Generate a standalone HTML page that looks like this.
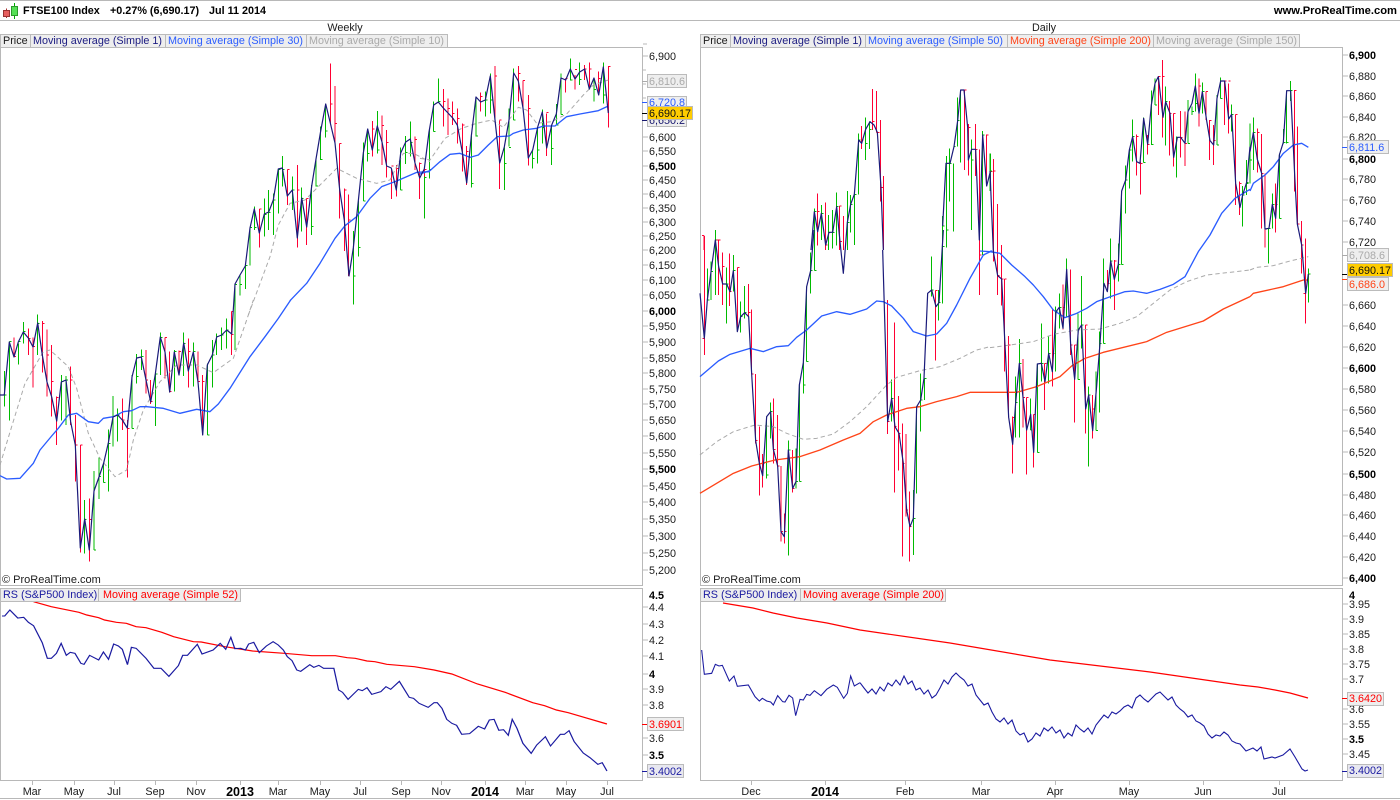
<!DOCTYPE html>
<html><head><meta charset="utf-8"><title>FTSE100 Index</title>
<style>
html,body{margin:0;padding:0;background:#fff;width:1400px;height:800px;overflow:hidden}
svg{display:block;position:absolute;left:0;top:0}
text{font-family:"Liberation Sans",sans-serif;font-size:10.8px;fill:#1a1a1a}
.b{font-weight:bold;fill:#000}
.g{fill:none;stroke:#00bb00;stroke-width:3}
.r{fill:none;stroke:#ff0033;stroke-width:3}
.k{fill:none;stroke:#1a1a7a;stroke-linejoin:round}
.m{fill:none;stroke:#2a5cff;stroke-linejoin:round}
.d{fill:none;stroke:#aaa;stroke-dasharray:4 3}
.o{fill:none;stroke:#ff4418;stroke-linejoin:round}
.f{fill:#eee;stroke:#bbb;stroke-width:1}
.bd{fill:none;stroke:#b8b8b8;stroke-width:1}
</style></head><body>
<svg width="1400" height="800" viewBox="0 0 1400 800" xmlns="http://www.w3.org/2000/svg">
<rect width="1400" height="800" fill="#fff"/>
<!-- frame -->
<path class="bd" d="M0 .5H1400M0 20.5H1400M0 47.5H642.5M700 47.5H1342.5M0 798.5H1400"/>
<path class="bd" d="M.5 47V585.5H642.5V47M700.5 47V585.5H1342.5V47M.5 588.5H642.5V780.5H.5ZM700.5 588.5H1342.5V780.5H700.5Z"/>

<!-- WEEKLY bars -->
<g transform="translate(0,300) scale(.33333)" shape-rendering="crispEdges">
<path class="g" d="M13 213V320M13 285h6M28 125V362M28 125h6M55 130V193M55 125h6M70 66V130M70 95h6M113 43V165M113 70h6M184 225V362M184 245h6M198 228V375M198 240h6M254 600V760M254 658h6M282 513V750M282 750h6M297 472V597M297 530h6M311 490V548M311 548h6M325 388V575M325 430h6M339 288V440M339 350h6M353 325V425M353 345h6M396 225V385M396 385h6M410 162V250M410 230h6M424 148V210M424 170h6M466 215V378M466 222h6M481 97V225M481 112h6M523 150V275M523 155h6M551 98V228M551 130h6M580 128V260M580 155h6M622 190V405M622 405h6M637 120V263M637 165h6M650 100V165M650 110h6M665 83V150M665 105h6M680 55V145M680 90h6"/>
<path class="r" d="M42 112V170M42 170h6M85 85V165M85 115h6M99 112V263M99 140h6M127 63V218M127 70h6M141 88V290M141 165h6M155 135V350M155 245h6M170 290V435M170 292h6M212 200V375M212 240h6M226 345V545M226 435h6M241 435V758M241 435h6M268 595V785M268 658h6M367 295V390M367 360h6M382 360V533M382 385h6M438 150V280M438 240h6M452 240V312M452 305h6M495 112V235M495 112h6M509 155V278M509 275h6M537 152V225M537 155h6M565 115V262M565 155h6M594 155V248M594 245h6M608 225V405M608 245h6M695 38V130M695 103h6"/>
</g>
<g transform="translate(190,55) scale(.33333)" shape-rendering="crispEdges">
<path class="g" d="M135 688V885M135 688h6M150 660V722M150 688h6M166 632V702M166 632h6M180 518V632M180 518h6M193 455V525M193 518h6M223 430V545M223 478h6M236 405V525M236 472h6M250 415V540M250 435h6M265 340V475M265 343h6M277 303V395M277 343h6M307 365V465M307 405h6M335 397V530M335 430h6M365 390V540M365 515h6M378 313V395M378 393h6M392 215V315M392 313h6M407 147V248M407 228h6M490 528V748M490 663h6M505 438V605M505 578h6M520 262V438M520 438h6M533 222V320M533 295h6M562 168V295M562 285h6M632 277V405M632 405h6M647 243V327M647 293h6M661 200V305M661 262h6M704 343V490M704 368h6M718 220V370M718 343h6"/>
<path class="r" d="M125 770V900M125 770h6M208 462V578M208 462h6M292 343V450M292 343h6M322 330V578M322 405h6M349 430V570M349 430h6M421 25V205M421 147h6M435 93V265M435 205h6M448 265V490M448 265h6M463 400V588M463 405h6M476 418V663M476 495h6M547 198V305M547 222h6M576 182V330M576 212h6M590 225V367M590 262h6M604 340V432M604 333h6M619 330V425M619 340h6M675 245V345M675 253h6M689 322V432M689 325h6"/>
</g>
<g transform="translate(420,50) scale(.33333)" shape-rendering="crispEdges">
<path class="g" d="M41 155V245M41 245h6M55 85V155M55 155h6M154 258V413M154 400h6M168 140V260M168 258h6M196 125V200M196 150h6M211 70V190M211 150h6M253 292V420M253 340h6M267 175V290M267 292h6M281 55V210M281 210h6M338 298V355M338 325h6M353 235V340M353 300h6M367 178V280M367 232h6M395 225V345M395 295h6M409 162V225M409 225h6M423 70V193M423 193h6M451 25V92M451 90h6M479 37V105M479 88h6M522 85V155M522 118h6M550 38V160M550 135h6"/>
<path class="r" d="M13 358V380M13 358h6M70 117V230M70 155h6M84 145V255M84 175h6M97 155V225M97 190h6M112 175V280M112 205h6M127 220V365M127 225h6M140 288V405M140 305h6M182 127V185M182 140h6M225 48V215M225 78h6M239 212V417M239 210h6M295 48V155M295 70h6M309 92V175M309 92h6M325 135V347M325 175h6M380 190V318M380 187h6M437 85V128M437 85h6M465 75V118M465 58h6M494 45V90M494 57h6M508 38V118M508 57h6M536 65V135M536 85h6M565 48V232M565 50h6"/>
</g>
<!-- weekly MA10 -->
<g transform="translate(0,300) scale(.33333)"><path class="d" style="stroke-width:3;stroke-dasharray:13 9" d="M0 495L35 380L75 250L130 155L150 150L205 200L230 265L265 400L300 475L345 530L380 510L400 420L430 330L480 245L530 195L590 195L640 218L700 175L740 60L760 0"/></g>
<g transform="translate(190,55) scale(.33333)"><path class="d" style="stroke-width:3;stroke-dasharray:13 9" d="M175 780L240 605L265 510L300 445L345 435L405 375L440 340L500 370L560 385L600 375L640 295L670 295L720 320"/></g>
<g transform="translate(420,50) scale(.33333)"><path class="d" style="stroke-width:3;stroke-dasharray:13 9" d="M0 325L30 330L75 265L125 235L170 220L215 210L250 232L295 172L320 180L350 220L395 215L440 192L490 135L520 105L565 90"/></g>
<!-- weekly MA30 -->
<g transform="translate(0,300) scale(.33333)"><path class="m" stroke-width="4" d="M0 527L20 537L60 535L100 490L120 450L155 408L175 385L205 345L230 340L265 365L295 370L310 355L340 350L370 335L395 332L420 320L440 320L490 325L540 340L590 328L630 335L655 312L690 265L750 170L795 110L835 55L872 0"/></g>
<g transform="translate(190,55) scale(.33333)"><path class="m" stroke-width="4" d="M300 737L350 685L390 625L435 550L465 512L500 485L540 430L575 395L620 378L680 352L720 350"/></g>
<g transform="translate(420,50) scale(.33333)"><path class="m" stroke-width="4" d="M0 372L30 362L60 335L90 313L120 310L150 322L175 315L205 285L232 260L268 258L280 250L310 240L350 235L370 228L405 228L440 200L480 192L535 182L565 168"/></g>
<!-- weekly close -->
<polyline class="k" stroke-width="1.2" points="0,395 4.3,395 9.3,342 14,357 18.3,342 23.3,332 28.3,338 33,347 37.7,323 42.3,355 47,382 51.7,397 56.7,421 61.3,382 66,380 70.7,422 75.3,445 80.3,548 84.7,519 89.3,550 94,491 99,477 103.7,463 108.3,443 113,417 117.7,415 122.3,420 127.3,428 132,377 136.7,358 141.3,357 146,380 150.7,402 155.3,374 160.3,337 165,352 169.7,392 174.3,352 179,375 183.7,343 188.3,371 193.3,352 198,382 202.7,435 207.3,365 212.3,355 216.7,337 221.7,335 226.7,330 231.7,334 235,284 240,275 245.3,266 250,228 254.3,209 259.3,233 264.3,214 268.7,212 273.3,200 278.3,169 282.3,168 287.3,196 292.3,190 297.3,238 301.7,198 306.7,227 311.7,186 316,159 320.7,131 325.7,104 330.3,123 335,143 339.7,190 344.3,220 349,276 353.3,248 358.3,201 363.3,153 367.7,129 372.3,150 377.3,126 382,142 386.7,166 391.3,168 396.3,190 400.7,153 405.7,142 410.3,139 415,163 419.7,178 424.3,169 429,132 433.7,105 438.3,102 443.3,108 448,113 452.7,118 457.3,125 462.3,152 466.7,183 471.3,136 476,97 480.7,102 485.3,100 490.3,76 495,120 499.7,163 504.3,147 509,120 513.7,73 518.3,81 523,108 528.3,158 532.7,150 537.7,127 542.3,112 546.7,148 551.7,125 556.3,114 561,78 565.7,80 570.3,69 575,79 579.7,72 584.7,69 589.3,89 594,78 598.7,95 603.3,67 608.3,113"/>

<!-- DAILY bars -->
<g transform="translate(700,230) scale(.33333)" shape-rendering="crispEdges">
<path class="g" d="M22 115V210M22 210h6M33 95V210M33 125h6M46 0V195M46 30h6M80 112V280M80 162h6M100 75V185M100 122h6M122 215V308M122 260h6M134 168V265M134 248h6M200 560V745M200 735h6M212 517V625M212 545h6M265 632V977M265 660h6M288 655V775M288 755h6M298 465V755M298 755h6M310 398V490M310 465h6M320 170V395M320 395h6M332 68V190M332 122h6M343 0V122M343 122h6M575 448V575M575 505h6M640 780V975M640 865h6M650 530V790M650 530h6M662 430V605M662 510h6M674 445V510M674 445h6M695 80V200M695 180h6M716 180V272M716 218h6M727 0V220M727 50h6M740 0V53M740 0h6M848 0V75M848 75h6"/>
<path class="r" d="M13 18V375M13 325h-6M56 30V195M56 30h6M68 68V225M68 110h6M88 70V228M88 185h6M112 112V305M112 112h6M146 162V260M146 248h6M155 238V432M155 432h6M167 432V640M167 632h6M178 590V797M178 700h6M188 672V773M188 700h6M220 505V700M220 658h6M233 555V710M233 708h6M243 708V935M243 905h6M253 850V940M253 905h6M278 660V788M278 775h6M562 210V612M562 575h6M584 277V788M584 590h6M596 498V722M596 610h6M607 580V980M607 700h6M618 612V860M618 840h6M628 785V995M628 890h6M707 182V392M707 182h6M838 0V195M838 75h6M880 0V95M880 90h6M893 0V195M893 140h6"/>
</g>
<g transform="translate(700,80) scale(.33333)" shape-rendering="crispEdges">
<path class="g" d="M46 453V510M343 385V510M343 395h6M364 375V480M364 400h6M386 405V510M386 457h6M398 390V505M398 457h6M409 337V497M409 380h6M442 333V510M442 427h6M452 345V458M452 373h6M463 342V495M463 343h6M476 160V343M476 180h6M497 112V240M497 190h6M508 125V207M508 148h6M727 408V510M727 438h6M739 228V503M739 250h6M749 205V365M749 250h6M760 250V455M760 200h6M772 52V200M772 122h6M782 30V248M782 30h6M814 178V450M814 240h6M848 153V510M848 165h6M871 220V332M871 275h6"/>
<path class="r" d="M12 467V510M12 467h-6M55 480V510M55 480h-6M353 340V497M353 395h6M376 367V510M376 495h6M418 378V510M418 378h6M430 408V510M420 485h6M485 138V207M485 180h6M518 27V150M518 125h6M530 33V157M530 157h6M542 120V365M532 157h6M550 288V510M543 322h6M793 30V270M793 30h6M805 132V287M805 142h6M827 132V288M827 208h6M838 208V510M827 208h6M859 163V318M859 165h6M881 237V510M871 275h6M893 372V510"/>
</g>
<g transform="translate(990,55) scale(.33333)" shape-rendering="crispEdges">
<path class="g" d="M0 295V408M0 348h6M77 965V1148M77 1043h6M88 852V1148M88 925h6M122 1030V1125M122 1125h6M142 925V1192M142 1192h6M154 805V980M154 925h6M176 843V985M176 895h6M196 755V950M196 770h6M208 715V820M208 757h6M230 610V785M230 785h6M264 775V973M264 973h6M275 663V880M275 810h6M296 995V1235M296 1020h6M318 950V1127M318 1127h6M329 830V1073M329 865h6M340 610V865M340 865h6M362 550V730M362 618h6M385 565V680M385 628h6M395 408V628M395 628h6M407 332V475M407 375h6M418 280V400M418 285h6M427 193V320M427 245h6M461 188V322M461 322h6M484 107V270M484 268h6M495 70V150M495 150h6M527 95V272M527 140h6M560 245V368M560 247h6M594 135V265M594 265h6M606 155V180M606 170h6M616 55V170M616 145h6M637 82V175M637 110h6M681 120V270M681 270h6M692 68V130M692 130h6M725 148V230M725 178h6M758 395V515M758 420h6M770 315V420M770 382h6"/>
<path class="r" d="M10 312V610M10 348h6M22 447V718M22 662h6M34 570V752M34 672h6M44 672V950M44 672h6M55 843V1087M55 870h6M67 1085V1255M67 1087h6M99 912V1118M99 1027h6M110 1027V1258M110 1027h6M131 1078V1237M131 1078h6M163 925V1065M163 925h6M187 760V995M187 895h6M219 688V823M219 757h6M242 643V900M242 870h6M254 870V1103M254 870h6M286 810V1135M286 810h6M307 1020V1150M307 1062h6M352 645V708M352 685h6M373 615V765M373 618h6M440 238V362M440 245h6M451 320V418M451 325h6M472 240V298M472 268h6M505 65V180M505 65h6M517 15V248M517 65h6M538 138V302M538 175h6M551 175V335M551 175h6M572 168V308M572 247h6M585 170V333M585 265h6M627 70V215M627 93h6M648 110V195M648 110h6M659 195V315M659 197h6M671 210V330M671 257h6M704 78V210M704 78h6M716 85V235M716 78h6M737 178V450M737 178h6M748 380V480M748 385h6"/>
</g>
<g transform="translate(1240,60) scale(.33333)" shape-rendering="crispEdges">
<path class="g" d="M7 378V500M7 405h6M20 300V370M20 370h6M30 190V370M30 300h6M40 172V330M40 218h6M86 505V610M86 505h6M97 400V505M97 433h6M118 280V475M118 475h6M130 207V250M130 247h6M140 92V250M140 247h6M152 63V123M152 92h6M205 625V728M205 642h6"/>
<path class="r" d="M52 205V338M52 218h6M64 222V505M64 340h6M75 340V563M75 507h6M107 370V517M107 433h6M163 90V395M163 92h6M172 200V495M172 492h6M185 483V640M185 555h6M197 535V790M197 700h-6"/>
</g>
<!-- daily MA150 -->
<g transform="translate(700,230) scale(.33333)"><path class="d" style="stroke-width:3;stroke-dasharray:13 9" d="M0 675L50 635L100 605L165 585L220 590L260 610L310 628L350 625L400 612L450 575L500 530L560 465L590 442L660 422L720 410L780 385L830 360L870 350"/></g>
<g transform="translate(990,55) scale(.33333)"><path class="d" style="stroke-width:3;stroke-dasharray:13 9" d="M0 878L60 870L130 860L190 838L260 825L330 822L390 805L440 785L490 745L540 705L590 680L650 660L780 645"/></g>
<g transform="translate(1240,60) scale(.33333)"><path class="d" style="stroke-width:3;stroke-dasharray:13 9" d="M30 630L50 622L100 617L150 603L205 590"/></g>
<!-- daily MA50 -->
<g transform="translate(700,230) scale(.33333)"><path class="m" stroke-width="4" d="M0 440L55 393L90 373L150 355L190 365L230 350L265 347L290 322L320 300L365 258L410 245L450 253L500 237L530 213L550 215L575 228L610 265L640 305L680 318L710 312L740 280L770 225L810 145L850 75L875 63L870 64"/></g>
<g transform="translate(990,55) scale(.33333)"><path class="m" stroke-width="4" d="M-30 588L0 590L30 595L65 630L105 665L130 690L160 725L190 765L225 788L260 775L290 760L320 740L370 722L405 710L430 708L470 715L510 703L550 688L585 665L625 590L660 540L695 475L735 430L780 403"/></g>
<g transform="translate(1240,60) scale(.33333)"><path class="m" stroke-width="4" d="M30 393L40 370L75 345L100 320L130 280L160 255L185 250L205 262"/></g>
<!-- daily MA200 -->
<g transform="translate(700,230) scale(.33333)"><path class="o" stroke-width="4" d="M0 790L50 760L100 730L155 708L225 690L300 680L360 660L430 630L480 610L520 575L560 555L620 535L660 530L710 515L770 500L810 487L870 487"/></g>
<g transform="translate(990,55) scale(.33333)"><path class="o" stroke-width="4" d="M0 1012L80 1012L140 995L210 965L245 933L285 910L340 892L470 860L530 832L640 798L700 762L780 725"/></g>
<g transform="translate(1240,60) scale(.33333)"><path class="o" stroke-width="4" d="M30 710L40 700L130 680L190 660L205 660"/></g>
<!-- daily close -->
<g transform="translate(700,230) scale(.33333)"><path class="k" stroke-width="3.6" d="M0 190L13 325L22 210L33 125L46 30L56 110L68 162L80 162L90 185L100 122L112 305L122 260L134 248L146 260L155 432L167 632L178 700L188 737L200 560L212 545L220 658L233 708L243 905L253 920L265 660L278 775L288 755L298 465L310 398L320 170L332 122L342 0M548 60L563 575L575 505L585 590L597 610L610 700L620 840L630 890L640 865L650 530L662 510L672 445L683 190L695 180L708 230L717 218L727 50L730 0"/></g>
<g transform="translate(700,80) scale(.33333)"><path class="k" stroke-width="3.6" d="M333 510L343 395L353 455L364 400L377 495L387 457L398 457L410 380L420 485L430 580L442 427L452 373L463 343L476 180L485 190L497 148L510 125L522 135L532 157L543 322L550 510M728 438L738 250L750 250L762 200L773 122L782 30L792 30L803 142L805 240L815 208L827 208L838 480L848 165L860 318L871 275"/></g>
<g transform="translate(990,55) scale(.33333)"><path class="k" stroke-width="3.6" d="M0 348L10 590L23 662L35 672L45 870L56 1087L68 1168L77 1043L88 925L99 1027L110 1125L122 1078L131 1192L142 927L154 925L165 980L176 895L187 950L198 770L208 757L219 820L230 643L242 870L254 973L265 825L275 810L287 1062L296 1020L308 1127L320 993L330 865L342 685L352 710L362 618L373 673L385 628L395 408L407 375L418 285L428 245L440 320L450 325L461 190L473 268L484 150L495 85L505 65L519 187L527 140L540 175L551 307L562 247L572 247L585 265L594 170L606 145L616 93L627 175L637 110L650 197L660 257L671 270L681 130L692 78L704 78L716 192L725 178L737 385L750 457L758 420L770 382L780 275"/></g>
<g transform="translate(1240,60) scale(.33333)"><path class="k" stroke-width="3.6" d="M30 275L40 218L52 298L65 340L75 507L87 505L97 433L107 475L118 285L130 247L140 92L152 92L165 365L172 492L185 555L197 700L205 642"/></g>

<!-- RS weekly -->
<g transform="translate(0,590) scale(.39463,.33333)">
<polyline fill="none" stroke="#ff0000" stroke-width="3.6" points="85,35 130,50 200,67 220,75 250,83 265,90 295,97 320,100 345,110 370,113 410,127 440,140 490,155 510,156 570,170 640,183 720,190 790,197 850,197 880,203 900,205 930,213 950,215 980,223 1050,230 1100,240 1145,252 1210,282 1280,307 1350,338 1380,347 1410,360 1440,368 1480,382 1538,402"/>
<polyline fill="none" stroke="#1a1aa0" stroke-width="3.2" points="5,78 12,78 25,60 45,84 60,82 72,97 85,107 107,158 120,205 130,205 143,190 155,160 168,196 178,187 190,190 205,220 213,223 227,196 250,210 262,186 275,208 288,162 300,168 310,178 323,224 333,172 345,175 370,205 390,235 408,235 428,259 452,227 463,196 475,196 500,163 512,192 540,180 558,160 572,178 585,142 595,176 610,175 622,180 630,162 643,157 657,188 675,168 692,155 705,165 718,180 728,200 740,212 752,240 762,244 785,224 795,232 808,226 820,235 846,235 858,300 868,307 882,328 908,298 918,302 930,293 942,313 965,305 978,290 990,298 1012,274 1037,322 1048,325 1062,340 1085,352 1100,338 1108,338 1120,355 1132,388 1145,400 1157,406 1170,433 1190,431 1212,409 1228,417 1240,390 1252,388 1264,421 1276,419 1288,436 1298,388 1310,415 1325,460 1346,490 1360,465 1382,440 1395,468 1420,433 1430,433 1442,422 1455,455 1478,489 1495,503 1515,523 1526,518 1538,543"/>
</g>
<!-- RS daily -->
<polyline fill="none" stroke="#ff0000" stroke-width="1.2" points="723,603 753,608 773,613 797,618 827,623 860,630 950,643 1050,660 1150,672 1240,685 1258,687 1275,690 1290,693 1308,698"/>
<g transform="translate(560,570) scale(.33333)"><polyline fill="none" stroke="#1a1aa0" stroke-width="3.2" points="425,240 433,313 455,310 466,283 477,288 487,286 508,333 522,318 532,349 565,345 585,380 598,393 607,385 620,393 632,396 640,405 653,377 668,395 675,396 687,376 698,384 707,437 720,388 730,390 740,373 750,376 763,362 783,377 800,358 820,345 832,352 851,385 862,370 872,318 883,348 900,338"/></g>
<polyline fill="none" stroke="#1a1aa0" stroke-width="1.1" points="860,682.7 864,688 868,693 872,689 876,694 880,687 884,691 888,683 892,686 896,680 900,685 904,676 908,684 912,681 916,690 920,688 924,694 928,690 932,698 936,695 940,688 944,680 948,684 952,677 956,673 960,677 964,680 968,686 972,684 976,695 980,700 984,705 988,703 992,712 996,719 1000,722 1004,718 1008,724 1012,720 1016,731 1020,735 1024,733 1028,742 1032,739 1036,733 1040,736 1044,728 1048,731 1052,727 1056,733 1060,730 1064,738 1068,733 1072,736 1076,725 1080,729 1084,732 1088,728 1092,734 1096,725 1100,720 1104,715 1108,718 1112,712 1116,714 1120,711 1124,707 1128,705 1132,708 1136,698 1140,695 1144,699 1148,702 1152,698 1156,694 1160,692 1164,696 1168,700 1172,697 1176,705 1180,709 1184,712 1188,717 1192,715 1196,721 1200,723 1204,726 1208,734 1212,738 1216,735 1220,736 1224,732 1228,735 1232,741 1236,743 1240,744 1246,751 1253,748 1257,751 1261,747 1264,759 1272,757 1275,758 1283,755 1290,749 1295,757 1302,769 1305,771 1308,770"/>

<!-- axis ticks -->
<path stroke="#b8b8b8" fill="none" d="M643 44h4M643 56h5M643 70h3M643 84h3M643 98h3M643 137h5M643 151h5M643 166h5M643 180h5M643 194h5M643 208h5M643 222h5M643 236h5M643 250h5M643 265h5M643 280h5M643 295h5M643 311h5M643 326h5M643 342h5M643 358h5M643 373h5M643 389h5M643 404h5M643 420h5M643 436h5M643 453h5M643 469h5M643 486h5M643 502h5M643 519h5M643 536h5M643 553h5M643 570h5M1343 55h5M1343 76h5M1343 96h5M1343 117h5M1343 137h5M1343 159h5M1343 179h5M1343 200h5M1343 221h5M1343 242h5M1343 305h5M1343 326h5M1343 347h5M1343 368h5M1343 389h5M1343 410h5M1343 431h5M1343 452h5M1343 474h5M1343 495h5M1343 515h5M1343 536h5M1343 557h5M1343 578h5M643 607h5M643 624h5M643 640h5M643 656h5M643 674h5M643 689h5M643 705h5M643 738h5M643 755h5M1343 604h5M1343 619h5M1343 634h5M1343 649h5M1343 664h5M1343 679h5M1343 709h5M1343 724h5M1343 739h5M1343 754h5M32.5 781v4M74.5 781v4M114.5 781v4M155.5 781v4M196.5 781v4M240.5 781v4M278.5 781v4M320.5 781v4M360.5 781v4M401.5 781v4M441.5 781v4M485.5 781v4M525.5 781v4M566.5 781v4M607.5 781v4M751.5 781v4M825.5 781v4M905.5 781v4M981.5 781v4M1055.5 781v4M1129.5 781v4M1203.5 781v4M1279.5 781v4"/>
<path fill="none" d="M642 81.5h5" stroke="#aaa"/><path fill="none" d="M642 102.5h5" stroke="#2a5cff"/><path fill="none" d="M642 113.5h5" stroke="#000"/><path fill="none" d="M642 120.5h5" stroke="#16166e"/>
<path fill="none" d="M1342 147.5h5" stroke="#2a5cff"/><path fill="none" d="M1342 255.5h5" stroke="#aaa"/><path fill="none" d="M1342 274.5h5" stroke="#000"/><path fill="none" d="M1342 279.5h5" stroke="#ff4418"/>
<path fill="none" d="M642 724.5h5" stroke="#f00"/><path fill="none" d="M642 771.5h5" stroke="#1a1aa0"/><path fill="none" d="M1342 698.5h5" stroke="#f00"/><path fill="none" d="M1342 771.5h5" stroke="#1a1aa0"/>

<!-- left axis labels -->
<g>
<text x="649" y="60">6,900</text><text x="649" y="141">6,600</text><text x="649" y="155">6,550</text><text class="b" x="649" y="170">6,500</text><text x="649" y="184">6,450</text><text x="649" y="198">6,400</text><text x="649" y="212">6,350</text><text x="649" y="226">6,300</text><text x="649" y="240">6,250</text><text x="649" y="254">6,200</text><text x="649" y="269">6,150</text><text x="649" y="284">6,100</text><text x="649" y="299">6,050</text><text class="b" x="649" y="315">6,000</text><text x="649" y="330">5,950</text><text x="649" y="346">5,900</text><text x="649" y="362">5,850</text><text x="649" y="377">5,800</text><text x="649" y="393">5,750</text><text x="649" y="408">5,700</text><text x="649" y="424">5,650</text><text x="649" y="440">5,600</text><text x="649" y="457">5,550</text><text class="b" x="649" y="473">5,500</text><text x="649" y="490">5,450</text><text x="649" y="506">5,400</text><text x="649" y="523">5,350</text><text x="649" y="540">5,300</text><text x="649" y="557">5,250</text><text x="649" y="574">5,200</text>
<text class="b" x="649" y="599">4.5</text><text x="649" y="611">4.4</text><text x="649" y="628">4.3</text><text x="649" y="644">4.2</text><text x="649" y="660">4.1</text><text class="b" x="649" y="678">4</text><text x="649" y="693">3.9</text><text x="649" y="709">3.8</text><text x="649" y="742">3.6</text><text class="b" x="649" y="759">3.5</text>
</g>
<!-- right axis labels -->
<g>
<text class="b" x="1349" y="59">6,900</text><text x="1349" y="80">6,880</text><text x="1349" y="100">6,860</text><text x="1349" y="121">6,840</text><text x="1349" y="141">6,820</text><text class="b" x="1349" y="163">6,800</text><text x="1349" y="183">6,780</text><text x="1349" y="204">6,760</text><text x="1349" y="225">6,740</text><text x="1349" y="246">6,720</text><text x="1349" y="309">6,660</text><text x="1349" y="330">6,640</text><text x="1349" y="351">6,620</text><text class="b" x="1349" y="372">6,600</text><text x="1349" y="393">6,580</text><text x="1349" y="414">6,560</text><text x="1349" y="435">6,540</text><text x="1349" y="456">6,520</text><text class="b" x="1349" y="478">6,500</text><text x="1349" y="499">6,480</text><text x="1349" y="519">6,460</text><text x="1349" y="540">6,440</text><text x="1349" y="561">6,420</text><text class="b" x="1349" y="582">6,400</text>
<text class="b" x="1349" y="599">4</text><text x="1349" y="608">3.95</text><text x="1349" y="623">3.9</text><text x="1349" y="638">3.85</text><text x="1349" y="653">3.8</text><text x="1349" y="668">3.75</text><text x="1349" y="683">3.7</text><text x="1349" y="713">3.6</text><text x="1349" y="728">3.55</text><text class="b" x="1349" y="743">3.5</text><text x="1349" y="758">3.45</text>
</g>
<!-- tags -->
<g>
<rect class="f" x="647.5" y="74.5" width="39" height="13"/><text x="649" y="85" style="fill:#aaa">6,810.6</text>
<rect class="f" x="647.5" y="96.5" width="39" height="13"/><text x="649" y="106" style="fill:#2a5cff">6,720.8</text>
<rect class="f" x="647.5" y="113.5" width="39" height="13"/><text x="649" y="124" style="fill:#16166e">6,650.2</text>
<rect x="647.5" y="106.5" width="45" height="13" fill="#ffcc00" stroke="#bbb"/><text x="649" y="117" style="fill:#111">6,690.17</text>
<rect class="f" x="1347.5" y="140.5" width="41" height="13"/><text x="1349" y="151" style="fill:#2a5cff">6,811.6</text>
<rect class="f" x="1347.5" y="248.5" width="41" height="13"/><text x="1349" y="259" style="fill:#aaa">6,708.6</text>
<rect class="f" x="1347.5" y="277.5" width="41" height="13"/><text x="1349" y="288" style="fill:#ff4418">6,686.0</text>
<rect x="1347.5" y="263.5" width="45" height="13" fill="#ffcc00" stroke="#bbb"/><text x="1349" y="274" style="fill:#111">6,690.17</text>
<rect class="f" x="647.5" y="717.5" width="36" height="13"/><text x="649" y="728" style="fill:#f00">3.6901</text>
<rect class="f" x="647.5" y="764.5" width="36" height="13" style="fill:#e8e8f0"/><text x="649" y="775" style="fill:#1a1aa0">3.4002</text>
<rect class="f" x="1347.5" y="692.5" width="36" height="13"/><text x="1349" y="702" style="fill:#f00">3.6420</text>
<rect class="f" x="1347.5" y="764.5" width="36" height="13" style="fill:#e8e8f0"/><text x="1349" y="774" style="fill:#1a1aa0">3.4002</text>
</g>
<!-- legends -->
<g>
<rect class="f" x=".5" y="34.5" width="30" height="13"/><text x="3" y="44">Price</text>
<rect class="f" x="30.5" y="34.5" width="135" height="13"/><text x="33" y="44" style="fill:#1a1a80">Moving average (Simple 1)</text>
<rect class="f" x="165.5" y="34.5" width="141" height="13"/><text x="168" y="44" style="fill:#2a5cff">Moving average (Simple 30)</text>
<rect class="f" x="306.5" y="34.5" width="141" height="13"/><text x="309" y="44" style="fill:#aaa">Moving average (Simple 10)</text>
<rect class="f" x="700.5" y="34.5" width="30" height="13"/><text x="703" y="44">Price</text>
<rect class="f" x="730.5" y="34.5" width="135" height="13"/><text x="733" y="44" style="fill:#1a1a80">Moving average (Simple 1)</text>
<rect class="f" x="865.5" y="34.5" width="142" height="13"/><text x="868" y="44" style="fill:#2a5cff">Moving average (Simple 50)</text>
<rect class="f" x="1007.5" y="34.5" width="146" height="13"/><text x="1010" y="44" style="fill:#ff4418">Moving average (Simple 200)</text>
<rect class="f" x="1153.5" y="34.5" width="146" height="13"/><text x="1156" y="44" style="fill:#aaa">Moving average (Simple 150)</text>
<rect class="f" x=".5" y="588.5" width="98" height="13"/><text x="3" y="598" style="fill:#1a1aa0">RS (S&amp;P500 Index)</text>
<rect class="f" x="98.5" y="588.5" width="142" height="13"/><text x="103" y="598" style="fill:#f00">Moving average (Simple 52)</text>
<rect class="f" x="700.5" y="588.5" width="100" height="13"/><text x="703" y="598" style="fill:#1a1aa0">RS (S&amp;P500 Index)</text>
<rect class="f" x="800.5" y="588.5" width="145" height="13"/><text x="803" y="598" style="fill:#f00">Moving average (Simple 200)</text>
</g>
<text x="2" y="583" style="font-size:11px">© ProRealTime.com</text><text x="702" y="583" style="font-size:11px">© ProRealTime.com</text>
<text x="345" y="31" text-anchor="middle">Weekly</text><text x="1044" y="31" text-anchor="middle">Daily</text>
<!-- title -->
<path d="M6.5 8.5V18" stroke="#a33" fill="none"/><rect x="3.5" y="10.5" width="6" height="6" fill="#e86060" stroke="#933"/>
<path d="M14.5 3V19" stroke="#0a0" fill="none"/><rect x="11.5" y="6.5" width="6" height="9" fill="#55e055" stroke="#2a9a2a"/>
<text class="b" x="23" y="14">FTSE100 Index</text><text class="b" x="110" y="14">+0.27% (6,690.17)</text><text class="b" x="209" y="14">Jul 11 2014</text>
<text class="b" x="1397" y="14" text-anchor="end" style="font-size:11.2px">www.ProRealTime.com</text>
<!-- time axis -->
<g text-anchor="middle">
<text x="32" y="795">Mar</text><text x="74" y="795">May</text><text x="114" y="795">Jul</text><text x="155" y="795">Sep</text><text x="196" y="795">Nov</text><text class="b" x="240" y="796" style="font-size:12.5px">2013</text><text x="278" y="795">Mar</text><text x="320" y="795">May</text><text x="360" y="795">Jul</text><text x="401" y="795">Sep</text><text x="441" y="795">Nov</text><text class="b" x="485" y="796" style="font-size:12.5px">2014</text><text x="525" y="795">Mar</text><text x="566" y="795">May</text><text x="607" y="795">Jul</text>
<text x="751" y="795">Dec</text><text class="b" x="825" y="796" style="font-size:12.5px">2014</text><text x="905" y="795">Feb</text><text x="981" y="795">Mar</text><text x="1055" y="795">Apr</text><text x="1129" y="795">May</text><text x="1203" y="795">Jun</text><text x="1279" y="795">Jul</text>
</g>
</svg>
</body></html>
